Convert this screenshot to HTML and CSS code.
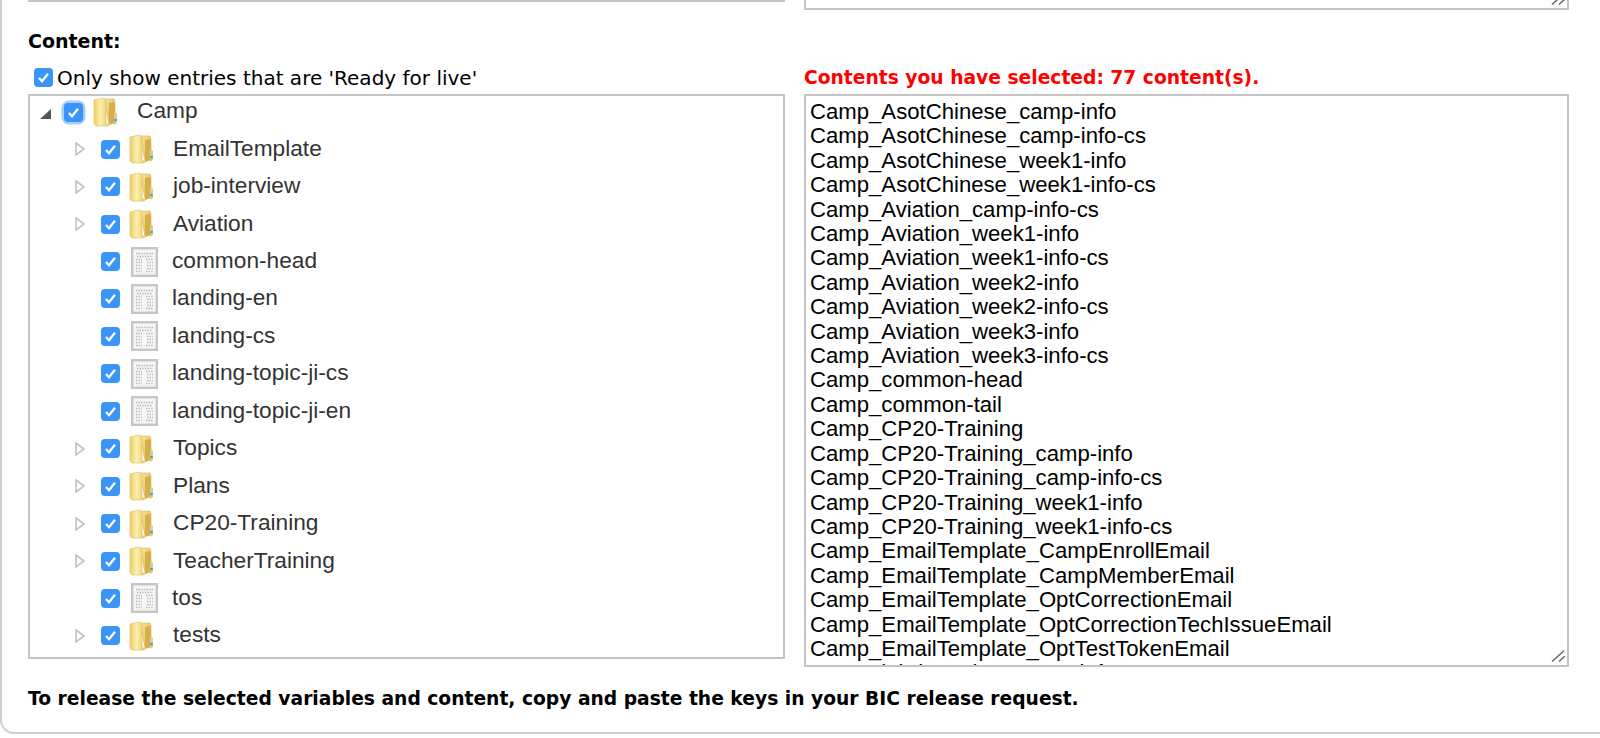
FILE: index.html
```html
<!DOCTYPE html>
<html lang="en">
<head>
    <meta charset="UTF-8">
    <meta name="viewport" content="width=device-width, initial-scale=1.0">
    <title>Release content</title>
    <link rel="stylesheet" href="styles.css">
</head>
<body>
    <svg class="icon-defs" width="0" height="0">
        <defs>
            <linearGradient id="folder-back" x1="0" y1="0" x2="1" y2="1">
                <stop offset="0" stop-color="#fbeaa0"/>
                <stop offset="1" stop-color="#dcae3e"/>
            </linearGradient>
            <linearGradient id="folder-front" x1="0" y1="0" x2="1" y2="0">
                <stop offset="0" stop-color="#efcf62"/>
                <stop offset="0.45" stop-color="#fcf0b0"/>
                <stop offset="1" stop-color="#eac55a"/>
            </linearGradient>
            <symbol id="folder" viewBox="0 0 25 30">
                <path d="M11 2h10l1 3v20l-6 2z" fill="url(#folder-back)" stroke="#d9b75c" stroke-width=".6"/>
                <path d="M1 3l9-2 3 2v23l3 2-1 1H3l-2-2z" fill="url(#folder-front)" stroke="#dcbc64" stroke-width=".6"/>
                <path d="M16 6l5-1 1 4v17l-6 2z" fill="#d6ae4a"/>
                <path d="M21 15l3 2v9l-3 2z" fill="#e8c860"/>
                <rect x="21.5" y="18" width="2" height="4" fill="#bcd3d6"/>
                <circle cx="22.5" cy="23" r="1.3" fill="#38a3d6"/>
            </symbol>
            <symbol id="doc" viewBox="0 0 27 30">
                <rect x="1.2" y="1.2" width="24.6" height="27.6" fill="#f6f6f6" stroke="#c6c6c6" stroke-width="2.4"/>
                <path d="M5 6.5h17M6 9.5h15M5 12.5h6M15 12.5h7M5 15.5h6M16 15.5h6M5 18.5h6M16 18.5h6M5 21.5h6M16 21.5h6M5 24.5h6M15 24.5h7" fill="none" stroke="#b6b6b6" stroke-width="1.5" stroke-dasharray="1.4 1.2"/>
            </symbol>
            <symbol id="tick" viewBox="0 0 19 19">
                <rect width="19" height="19" rx="4" fill="#3b94f7"/>
                <path d="M5 10l3 3.2 6-7.4" fill="none" stroke="#fff" stroke-width="2.3"/>
            </symbol>
            <symbol id="closed" viewBox="0 0 10 14">
                <path d="M1 1l8 6-8 6z" fill="#fff" stroke="#c2c2c2" stroke-width="1.6"/>
            </symbol>
            <symbol id="open" viewBox="0 0 13 13">
                <path d="M12 2v10H1z" fill="#555"/>
            </symbol>
            <symbol id="grip" viewBox="0 0 14 12">
                <path d="M1 11.5L13 .7M8 11.5L14 6" fill="none" stroke="#6a6a6a" stroke-width="1.5"/>
            </symbol>
        </defs>
    </svg>

    <div class="panel">
        <div class="top-row">
            <div class="top-left"></div>
            <div class="top-right">
                <svg class="grip"><use href="#grip"/></svg>
            </div>
        </div>

        <h2 class="section-title">Content:</h2>

        <div class="columns">
            <div class="column">
                <label class="ready-filter">
                    <svg class="check"><use href="#tick"/></svg>
                    Only show entries that are 'Ready for live'
                </label>
                <div class="tree">
                    <div class="node root">
                        <svg class="arrow-open"><use href="#open"/></svg>
                        <span class="check-focus"><svg class="check"><use href="#tick"/></svg></span>
                        <svg class="folder"><use href="#folder"/></svg>
                        <span class="node-name">Camp</span>
                    </div>
                    <div class="node">
                        <svg class="arrow"><use href="#closed"/></svg>
                        <svg class="check"><use href="#tick"/></svg>
                        <svg class="folder"><use href="#folder"/></svg>
                        <span class="node-name">EmailTemplate</span>
                    </div>
                    <div class="node">
                        <svg class="arrow"><use href="#closed"/></svg>
                        <svg class="check"><use href="#tick"/></svg>
                        <svg class="folder"><use href="#folder"/></svg>
                        <span class="node-name">job-interview</span>
                    </div>
                    <div class="node">
                        <svg class="arrow"><use href="#closed"/></svg>
                        <svg class="check"><use href="#tick"/></svg>
                        <svg class="folder"><use href="#folder"/></svg>
                        <span class="node-name">Aviation</span>
                    </div>
                    <div class="node leaf">
                        <svg class="check"><use href="#tick"/></svg>
                        <svg class="doc"><use href="#doc"/></svg>
                        <span class="node-name">common-head</span>
                    </div>
                    <div class="node leaf">
                        <svg class="check"><use href="#tick"/></svg>
                        <svg class="doc"><use href="#doc"/></svg>
                        <span class="node-name">landing-en</span>
                    </div>
                    <div class="node leaf">
                        <svg class="check"><use href="#tick"/></svg>
                        <svg class="doc"><use href="#doc"/></svg>
                        <span class="node-name">landing-cs</span>
                    </div>
                    <div class="node leaf">
                        <svg class="check"><use href="#tick"/></svg>
                        <svg class="doc"><use href="#doc"/></svg>
                        <span class="node-name">landing-topic-ji-cs</span>
                    </div>
                    <div class="node leaf">
                        <svg class="check"><use href="#tick"/></svg>
                        <svg class="doc"><use href="#doc"/></svg>
                        <span class="node-name">landing-topic-ji-en</span>
                    </div>
                    <div class="node">
                        <svg class="arrow"><use href="#closed"/></svg>
                        <svg class="check"><use href="#tick"/></svg>
                        <svg class="folder"><use href="#folder"/></svg>
                        <span class="node-name">Topics</span>
                    </div>
                    <div class="node">
                        <svg class="arrow"><use href="#closed"/></svg>
                        <svg class="check"><use href="#tick"/></svg>
                        <svg class="folder"><use href="#folder"/></svg>
                        <span class="node-name">Plans</span>
                    </div>
                    <div class="node">
                        <svg class="arrow"><use href="#closed"/></svg>
                        <svg class="check"><use href="#tick"/></svg>
                        <svg class="folder"><use href="#folder"/></svg>
                        <span class="node-name">CP20-Training</span>
                    </div>
                    <div class="node">
                        <svg class="arrow"><use href="#closed"/></svg>
                        <svg class="check"><use href="#tick"/></svg>
                        <svg class="folder"><use href="#folder"/></svg>
                        <span class="node-name">TeacherTraining</span>
                    </div>
                    <div class="node leaf">
                        <svg class="check"><use href="#tick"/></svg>
                        <svg class="doc"><use href="#doc"/></svg>
                        <span class="node-name">tos</span>
                    </div>
                    <div class="node">
                        <svg class="arrow"><use href="#closed"/></svg>
                        <svg class="check"><use href="#tick"/></svg>
                        <svg class="folder"><use href="#folder"/></svg>
                        <span class="node-name">tests</span>
                    </div>
                </div>
            </div>
            <div class="column">
                <div class="selected-count">Contents you have selected: 77 content(s).</div>
                <div class="selected-box">
                    <textarea class="selected-keys" aria-label="Selected keys" readonly>Camp_AsotChinese_camp-info
Camp_AsotChinese_camp-info-cs
Camp_AsotChinese_week1-info
Camp_AsotChinese_week1-info-cs
Camp_Aviation_camp-info-cs
Camp_Aviation_week1-info
Camp_Aviation_week1-info-cs
Camp_Aviation_week2-info
Camp_Aviation_week2-info-cs
Camp_Aviation_week3-info
Camp_Aviation_week3-info-cs
Camp_common-head
Camp_common-tail
Camp_CP20-Training
Camp_CP20-Training_camp-info
Camp_CP20-Training_camp-info-cs
Camp_CP20-Training_week1-info
Camp_CP20-Training_week1-info-cs
Camp_EmailTemplate_CampEnrollEmail
Camp_EmailTemplate_CampMemberEmail
Camp_EmailTemplate_OptCorrectionEmail
Camp_EmailTemplate_OptCorrectionTechIssueEmail
Camp_EmailTemplate_OptTestTokenEmail
Camp_job-interview_camp-info</textarea>
                    <svg class="grip"><use href="#grip"/></svg>
                </div>
            </div>
        </div>

        <p class="release-note">To release the selected variables and content, copy and paste the keys in your BIC release request.</p>
    </div>
</body>
</html>
```

FILE: styles.css
```css
html, body {
    margin: 0;
    padding: 0;
    height: 738px;
    overflow: hidden;
    background: #fff;
}
.icon-defs {
    display: block;
    height: 0;
}
.panel {
    box-sizing: border-box;
    height: 734px;
    width: 1620px;
    padding: 0 0 0 26px;
    border: 2px solid #cfcfcf;
    border-top: none;
    border-radius: 0 0 14px 14px;
    font-family: "DejaVu Sans", sans-serif;
    color: #000;
}
.top-row {
    display: flex;
    gap: 19px;
    width: 1541px;
    height: 10px;
}
.top-left {
    width: 757px;
    height: 2px;
    background: #c4c4c4;
}
.top-right {
    position: relative;
    box-sizing: border-box;
    width: 765px;
    height: 10px;
    border: 2px solid #c4c4c4;
    border-top: none;
    overflow: hidden;
}
.grip {
    position: absolute;
    right: 2px;
    bottom: 3px;
    width: 14px;
    height: 12px;
}
.section-title {
    margin: 20px 0 0;
    font-size: 19px;
    line-height: 23px;
    font-weight: bold;
}
.columns {
    display: flex;
    gap: 19px;
    width: 1541px;
    margin-top: 0;
}
.column {
    display: flex;
    flex-direction: column;
}
.column:first-child {
    width: 757px;
}
.column:last-child {
    width: 765px;
}
.ready-filter {
    display: flex;
    align-items: center;
    gap: 4px;
    height: 41px;
    padding: 8px 0 0 6px;
    box-sizing: border-box;
    font-size: 20px;
}
.selected-count {
    display: flex;
    align-items: center;
    box-sizing: border-box;
    height: 41px;
    padding-top: 7px;
    font-size: 18.7px;
    font-weight: bold;
    color: #f00;
}
.tree {
    box-sizing: border-box;
    height: 565px;
    border: 2px solid #c4c4c4;
    overflow: hidden;
    font-family: "Liberation Sans", sans-serif;
    font-size: 22.7px;
    color: #333;
}
.node {
    display: flex;
    align-items: center;
    height: 37.45px;
    padding-left: 45px;
}
.node.root {
    height: 29px;
    margin-bottom: 4.5px;
    padding-left: 9px;
}
.node.leaf {
    padding-left: 71px;
}
.arrow, .arrow-open, .check, .check-focus, .folder, .doc {
    flex: none;
    margin-top: 2px;
}
.arrow {
    width: 10px;
    height: 14px;
    margin-right: 16px;
}
.arrow-open {
    width: 13px;
    height: 13px;
    margin-top: 6px;
    margin-right: 12px;
}
.check {
    width: 19px;
    height: 19px;
}
.ready-filter .check, .check-focus .check {
    margin-top: 0;
}
.check-focus {
    display: flex;
    width: 19px;
    height: 19px;
    margin-top: 3px;
    border-radius: 5px;
    box-shadow: 0 0 0 2.5px #a5cdf8;
}
.folder {
    width: 25px;
    height: 30px;
    margin-left: 9px;
}
.root .folder {
    margin-top: 3px;
    margin-left: 10px;
}
.doc {
    width: 27px;
    height: 30px;
    margin-left: 11px;
}
.node-name {
    margin-left: 19px;
}
.leaf .node-name {
    margin-left: 14px;
}
.selected-box {
    position: relative;
    width: 765px;
    height: 573px;
}
.selected-keys {
    display: block;
    box-sizing: border-box;
    width: 765px;
    height: 573px;
    border: 2px solid #c4c4c4;
    border-radius: 0;
    padding: 4px 4px 0;
    font-family: "Liberation Sans", sans-serif;
    font-size: 22.15px;
    line-height: 24.4px;
    color: #000;
    background: #fff;
    resize: none;
    overflow: hidden;
    outline: none;
}
.selected-box .grip {
    right: 4px;
    bottom: 5px;
}
.release-note {
    margin: 20px 0 0;
    font-size: 18.7px;
    line-height: 24px;
    font-weight: bold;
}
```
